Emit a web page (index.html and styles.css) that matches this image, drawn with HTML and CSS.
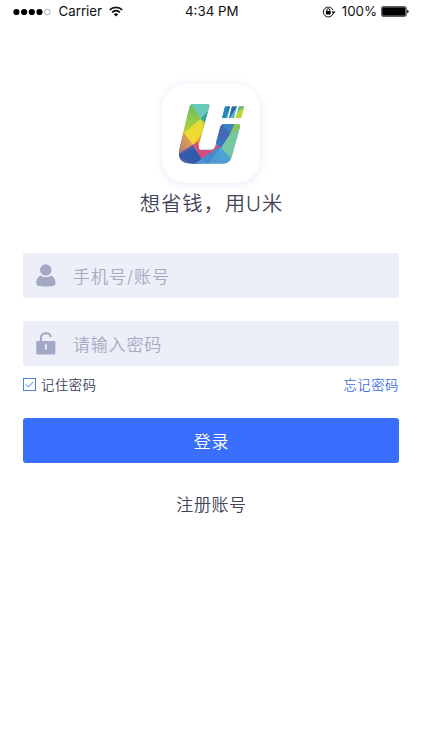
FILE: index.html
```
<!DOCTYPE html>
<html lang="zh-CN">
<head>
<meta charset="utf-8">
<title>登录</title>
<link rel="stylesheet" href="styles.css">
</head>
<body>
<header class="status">
  <div class="status-left">
    <svg class="dots" width="38" height="8" viewBox="0 0 38 8"><circle cx="3.4" cy="4" r="3.1"/><circle cx="11.1" cy="4" r="3.1"/><circle cx="18.8" cy="4" r="3.1"/><circle cx="26.5" cy="4" r="3.1"/><circle class="empty" cx="34.4" cy="4" r="2.8"/></svg>
    <span class="carrier">Carrier</span>
    <svg class="wifi" width="14" height="11" viewBox="0 0 14 11"><path class="arc" d="M.8 3.9a9 9 0 0 1 12.4 0M3.1 6.3a5.7 5.7 0 0 1 7.8 0"/><path d="M4.8 8.2a3.3 3.3 0 0 1 4.4 0L7 10.5z"/></svg>
  </div>
  <span class="time">4:34 PM</span>
  <div class="status-right">
    <svg class="rotation" width="14" height="12" viewBox="0 0 14 12"><path class="ring" d="M11.1 7.6A5 5 0 1 1 11 4.2"/><path d="M9.4 5.4h4.2l-2.1 2.5z"/><rect x="3.9" y="5" width="4.8" height="3.5" rx=".4"/><path class="ring" d="M4.9 5.2V4a1.4 1.4 0 0 1 2.8 0v1.2"/></svg>
    <span class="percent">100%</span>
    <svg class="battery" width="28" height="11" viewBox="0 0 28 11"><rect class="case" x=".5" y=".5" width="24.8" height="10" rx="1.6"/><rect x="1.2" y="1.2" width="23.4" height="8.6" rx=".9"/><path d="M26.2 3.8q1.4.2 1.4 1.7t-1.4 1.7z"/></svg>
  </div>
</header>
<main class="login">
  <div class="app-icon">
    <svg width="68.33" height="63.33" viewBox="80 80 205 190">
      <defs>
        <clipPath id="mark"><path d="M128 86H172Q179 86 177 94L146 206Q142 223 154 223H181Q191 223 194 213L210 155Q213 146 222 146H263Q271 146 269 155L244 244Q238 265 218 265H125Q78 265 87 222L117 97Q120 86 128 86Z"/></clipPath>
        <clipPath id="bars"><path d="M226 93H239L231 129H218Q215 129 216 125L223 97Q224 93 226 93ZM245 93H260L251 129H236ZM266 93H282L273 125Q272 129 268 129H256Z"/></clipPath>
        <linearGradient id="green" x1="0" y1="0" x2="0" y2="1"><stop offset="0" stop-color="#62bb67"/><stop offset="1" stop-color="#c2d52a"/></linearGradient>
        <linearGradient id="yellow" x1="0" y1="0" x2="0" y2="1"><stop offset="0" stop-color="#dddc36"/><stop offset="1" stop-color="#fbd72d"/></linearGradient>
        <linearGradient id="orange" x1="1" y1="0" x2="0" y2="1"><stop offset="0" stop-color="#f5b144"/><stop offset="1" stop-color="#ae6a80"/></linearGradient>
        <linearGradient id="blue" x1="0" y1="1" x2="1" y2="0"><stop offset="0" stop-color="#347fc7"/><stop offset="1" stop-color="#5150a4"/></linearGradient>
        <linearGradient id="sky" x1="0" y1="1" x2="1" y2="0"><stop offset="0" stop-color="#5d8fce"/><stop offset="1" stop-color="#43acd6"/></linearGradient>
      </defs>
      <g clip-path="url(#mark)">
        <path fill="#5fc4b9" d="M80 80h200v190H80z"/>
        <path fill="url(#green)" d="M80 80H122L151 130L96 185L80 170z"/>
        <path fill="#6bc9bb" d="M119 80H185L170 115L151 130z"/>
        <path fill="#36a69b" d="M151 130L175 105L162 151z"/>
        <path fill="#c9d83c" d="M151 130L168 148L157 180L128 210z"/>
        <path fill="url(#yellow)" d="M100 174L151 130L162 160L128 210z"/>
        <path fill="url(#orange)" d="M80 185L101 173L128 209L80 239z"/>
        <path fill="#535ca9" d="M80 238L128 208L160 270H80z"/>
        <path fill="#2f5bab" d="M85 240L131 219L158 248L133 270z"/>
        <path fill="#eda13c" d="M128 209L160 170L146 219z"/>
        <path fill="#d34e7c" d="M128 209L142 199L148 223H190L201 203L216 216L153 250z"/>
        <path fill="url(#sky)" d="M125 270L214 213L246 249L230 270z"/>
        <path fill="#458bcc" d="M153 250L190 226L214 213L171 270z"/>
        <path fill="url(#blue)" d="M196 203L206 140H255L240 177L212 218z"/>
        <path fill="#4468b3" d="M208 150L239 177L202 190z"/>
        <path fill="#3e82c6" d="M209 140H265L239 178z"/>
        <path fill="#8cc45c" d="M254 140H276L270 171L239 177z"/>
        <path fill="#77c6a0" d="M267 162L270 190L242 249L213 217L239 177z"/>
      </g>
      <g clip-path="url(#bars)">
        <path fill="#55b8c7" d="M212 90h75v42h-75z"/>
        <path fill="#2487bb" d="M212 90H238L227 132H212z"/>
        <path fill="#286aaa" d="M233 90H263L236 130z"/>
        <path fill="#b8d23c" d="M264 90H286L276 111L250 132z"/>
        <path fill="#54b6b2" d="M266 90H286L257 113z"/>
        <path fill="#c4d52f" d="M282 93L276 132H248z"/>
      </g>
    </svg>
  </div>
  <h1 class="slogan">想省钱，用U米</h1>
  <form class="form">
    <label class="field">
      <svg class="field-icon" width="20" height="23" viewBox="0 0 20 23"><circle cx="9.8" cy="6" r="5.8"/><path d="M4.2 11.6Q6.5 13.3 9.8 13.3T15.4 11.6Q19.5 14 19.5 19.4C19.5 21.8 16 22.4 9.8 22.4S.2 21.8.2 19.4Q.2 14 4.2 11.6Z"/></svg>
      <span class="placeholder account">手机号/账号</span>
    </label>
    <label class="field password">
      <svg class="field-icon" width="20" height="23" viewBox="0 0 20 23"><path class="shackle" d="M4.9 10V6.2C4.9-.2 14.7-.2 14.7 5.2"/><path fill-rule="evenodd" d="M1.3 9.1h17Q19.4 9.1 19.4 10.3v11q0 1.2-1.2 1.2H1.4Q.2 22.5.2 21.3v-11Q.2 9.1 1.3 9.1ZM8.9 12.6v4.8h2v-4.8z"/></svg>
      <span class="placeholder">请输入密码</span>
    </label>
    <div class="options">
      <span class="remember"><svg class="check" width="13" height="13" viewBox="0 0 13 13"><rect x=".5" y=".5" width="12" height="12"/><path d="M2.8 6.4L5.4 9L10.2 4"/></svg>记住密码</span>
      <a class="forgot">忘记密码</a>
    </div>
    <button class="submit" type="button">登录</button>
  </form>
  <a class="register">注册账号</a>
</main>
</body>
</html>
```
FILE: styles.css
```
* { box-sizing: border-box; }
body {
  margin: 0;
  height: 750px;
  overflow: hidden;
  background: #fff;
  color: #404359;
  font-family: Inter, "Noto Sans CJK SC DemiLight", "Noto Sans CJK SC", sans-serif;
  font-weight: 350;
}
svg { display: block; flex: none; }
.status {
  display: grid;
  grid-template-columns: 1fr auto 1fr;
  align-items: center;
  height: 23px;
  padding: 0 13px;
  color: #111;
  font: 13.3px/23px Inter, sans-serif;
}
.status-left, .status-right { display: flex; align-items: center; }
.status-right { justify-content: flex-end; }
.dots .empty { fill: none; stroke: #777; stroke-width: .6; }
.carrier { margin: 0 6.5px 0 7.5px; }
.wifi .arc { fill: none; stroke: #111; stroke-width: 1.8; }
.time { padding-left: 1.5px; }
.rotation .ring { fill: none; stroke: #111; stroke-width: 1; }
.percent { margin: 0 4px 0 6px; }
.battery .case { fill: none; stroke: #333; stroke-width: .8; }
.login {
  display: flex;
  flex-direction: column;
  align-items: center;
  padding: 61px 23px 0;
}
.app-icon {
  display: flex;
  align-items: center;
  justify-content: center;
  width: 98px;
  height: 99px;
  border-radius: 24px;
  background: #fff;
  box-shadow: 0 1px 10px #e6e9fa;
}
.slogan {
  margin: 6px 0 0;
  padding-left: 1px;
  font-size: 20.3px;
  font-weight: 350;
  line-height: 30px;
  letter-spacing: 1px;
}
.form { width: 100%; margin-top: 34px; }
.field {
  display: flex;
  align-items: center;
  height: 45px;
  padding-left: 13px;
  border-radius: 2px;
  background: #eceef8;
  color: #a4a9c4;
  font-size: 17px;
  letter-spacing: .8px;
}
.field-icon { fill: #a3a9c5; }
.field-icon .shackle { fill: none; stroke: #a3a9c5; stroke-width: 2; }
.placeholder { margin-left: 17px; }
.account { letter-spacing: 1px; }
.password { margin-top: 23px; }
.options {
  display: flex;
  justify-content: space-between;
  align-items: center;
  height: 37px;
  font-size: 13.3px;
  letter-spacing: .6px;
}
.remember { display: flex; align-items: center; gap: 5px; }
.check { fill: none; stroke: #4c7df0; stroke-width: 1; }
.forgot { color: #3f70e8; }
.submit {
  display: block;
  width: 100%;
  height: 45px;
  margin-top: 15px;
  padding: 0 0 0 1px;
  border: 0;
  border-radius: 3px;
  background: #396ffc;
  color: #fff;
  font: 350 17px/45px "Noto Sans CJK SC DemiLight", "Noto Sans CJK SC", sans-serif;
  letter-spacing: .7px;
}
.register {
  margin-top: 29px;
  padding-left: 1px;
  font-size: 17px;
  line-height: 26px;
  letter-spacing: .6px;
}
```
